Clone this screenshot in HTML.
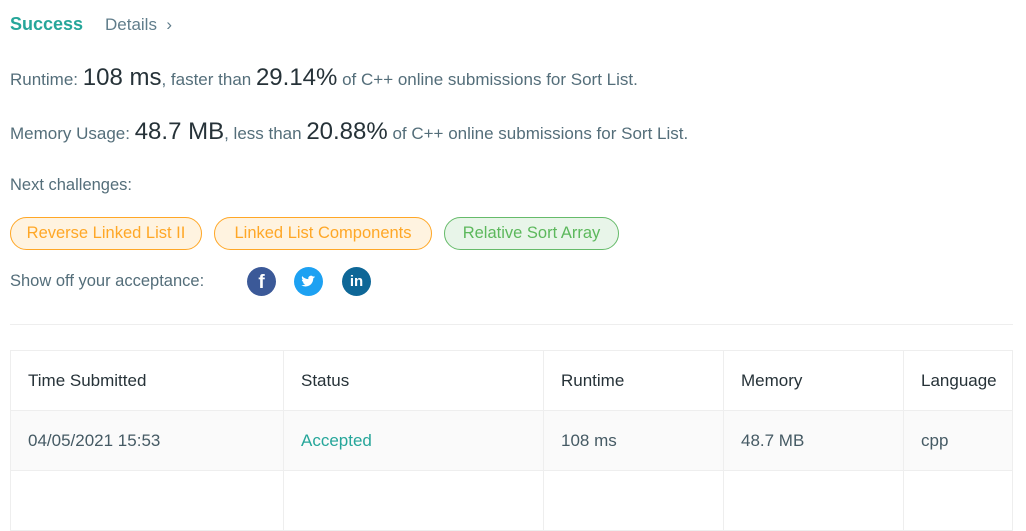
<!DOCTYPE html>
<html><head><meta charset="utf-8"><style>
body{margin:0;background:#fff;font-family:"Liberation Sans",sans-serif;color:#546e7a;width:1026px;height:480px;overflow:hidden;position:relative}
.a{position:absolute;white-space:nowrap}
.big{font-size:24px;color:#263238}
.pill{position:absolute;top:217px;height:33px;border-radius:17px;box-sizing:border-box;font-size:16.5px;line-height:31px;text-align:center}
.o{border:1px solid #ffa726;background:#fff3e0;color:#ffa726}
.g{border:1px solid #66bb6a;background:#e8f5e9;color:#5cb85c}
.ic{position:absolute;top:267px;width:29px;height:29px;border-radius:50%}
table{position:absolute;left:10px;top:350px;width:1003px;border-collapse:collapse;font-size:17px;color:#263238}
td{border:1px solid #eee;padding:0 0 0 17px;height:60px;box-sizing:border-box}
tr.r td{background:#fafafa;color:#455a64}
</style></head><body>
<div class="a" style="left:10px;top:14px;font-size:18px;font-weight:bold;color:#26a69a">Success</div>
<div class="a" style="left:105px;top:15px;font-size:17px;color:#607d8b">Details &nbsp;›</div>
<div class="a" style="left:10px;top:64px;font-size:17px">Runtime: <span class="big">108 ms</span>, faster than <span class="big">29.14%</span> of C++ online submissions for Sort List.</div>
<div class="a" style="left:10px;top:118px;font-size:17px">Memory Usage: <span class="big">48.7 MB</span>, less than <span class="big">20.88%</span> of C++ online submissions for Sort List.</div>
<div class="a" style="left:10px;top:176px;font-size:16.5px">Next challenges:</div>
<div class="pill o" style="left:10px;width:192px">Reverse Linked List II</div>
<div class="pill o" style="left:214px;width:218px">Linked List Components</div>
<div class="pill g" style="left:444px;width:175px">Relative Sort Array</div>
<div class="a" style="left:10px;top:272px;font-size:16.5px">Show off your acceptance:</div>
<div class="ic" style="left:247px;background:#3b5998;color:#fff;font-weight:bold;font-size:19px;text-align:center;line-height:31px">f</div>
<div class="ic" style="left:294px;background:#1da1f2"><svg width="29" height="29" viewBox="0 0 24 24"><path transform="translate(6 6) scale(.5)" fill="#fff" d="M23 4.6a9 9 0 0 1-2.6.7 4.6 4.6 0 0 0 2-2.5 9 9 0 0 1-2.9 1.1 4.5 4.5 0 0 0-7.7 4.1A12.8 12.8 0 0 1 1.6 3.2a4.5 4.5 0 0 0 1.4 6 4.5 4.5 0 0 1-2-.6v.1a4.5 4.5 0 0 0 3.6 4.4 4.5 4.5 0 0 1-2 .1 4.5 4.5 0 0 0 4.2 3.1A9 9 0 0 1 0 18.2 12.8 12.8 0 0 0 7 20.2c8.3 0 12.8-6.9 12.8-12.8v-.6A9 9 0 0 0 23 4.6z"/></svg></div>
<div class="ic" style="left:342px;background:#0e6797;color:#fff;font-weight:bold;font-size:15px;text-align:center;line-height:29px">in</div>
<div class="a" style="left:10px;top:324px;width:1003px;height:1px;background:#eee"></div>
<table>
<tr><td style="width:273px">Time Submitted</td><td style="width:260px">Status</td><td style="width:180px">Runtime</td><td style="width:180px">Memory</td><td>Language</td></tr>
<tr class="r"><td>04/05/2021 15:53</td><td style="color:#26a69a">Accepted</td><td>108 ms</td><td>48.7 MB</td><td>cpp</td></tr>
<tr><td></td><td></td><td></td><td></td><td></td></tr>
</table>
</body></html>
